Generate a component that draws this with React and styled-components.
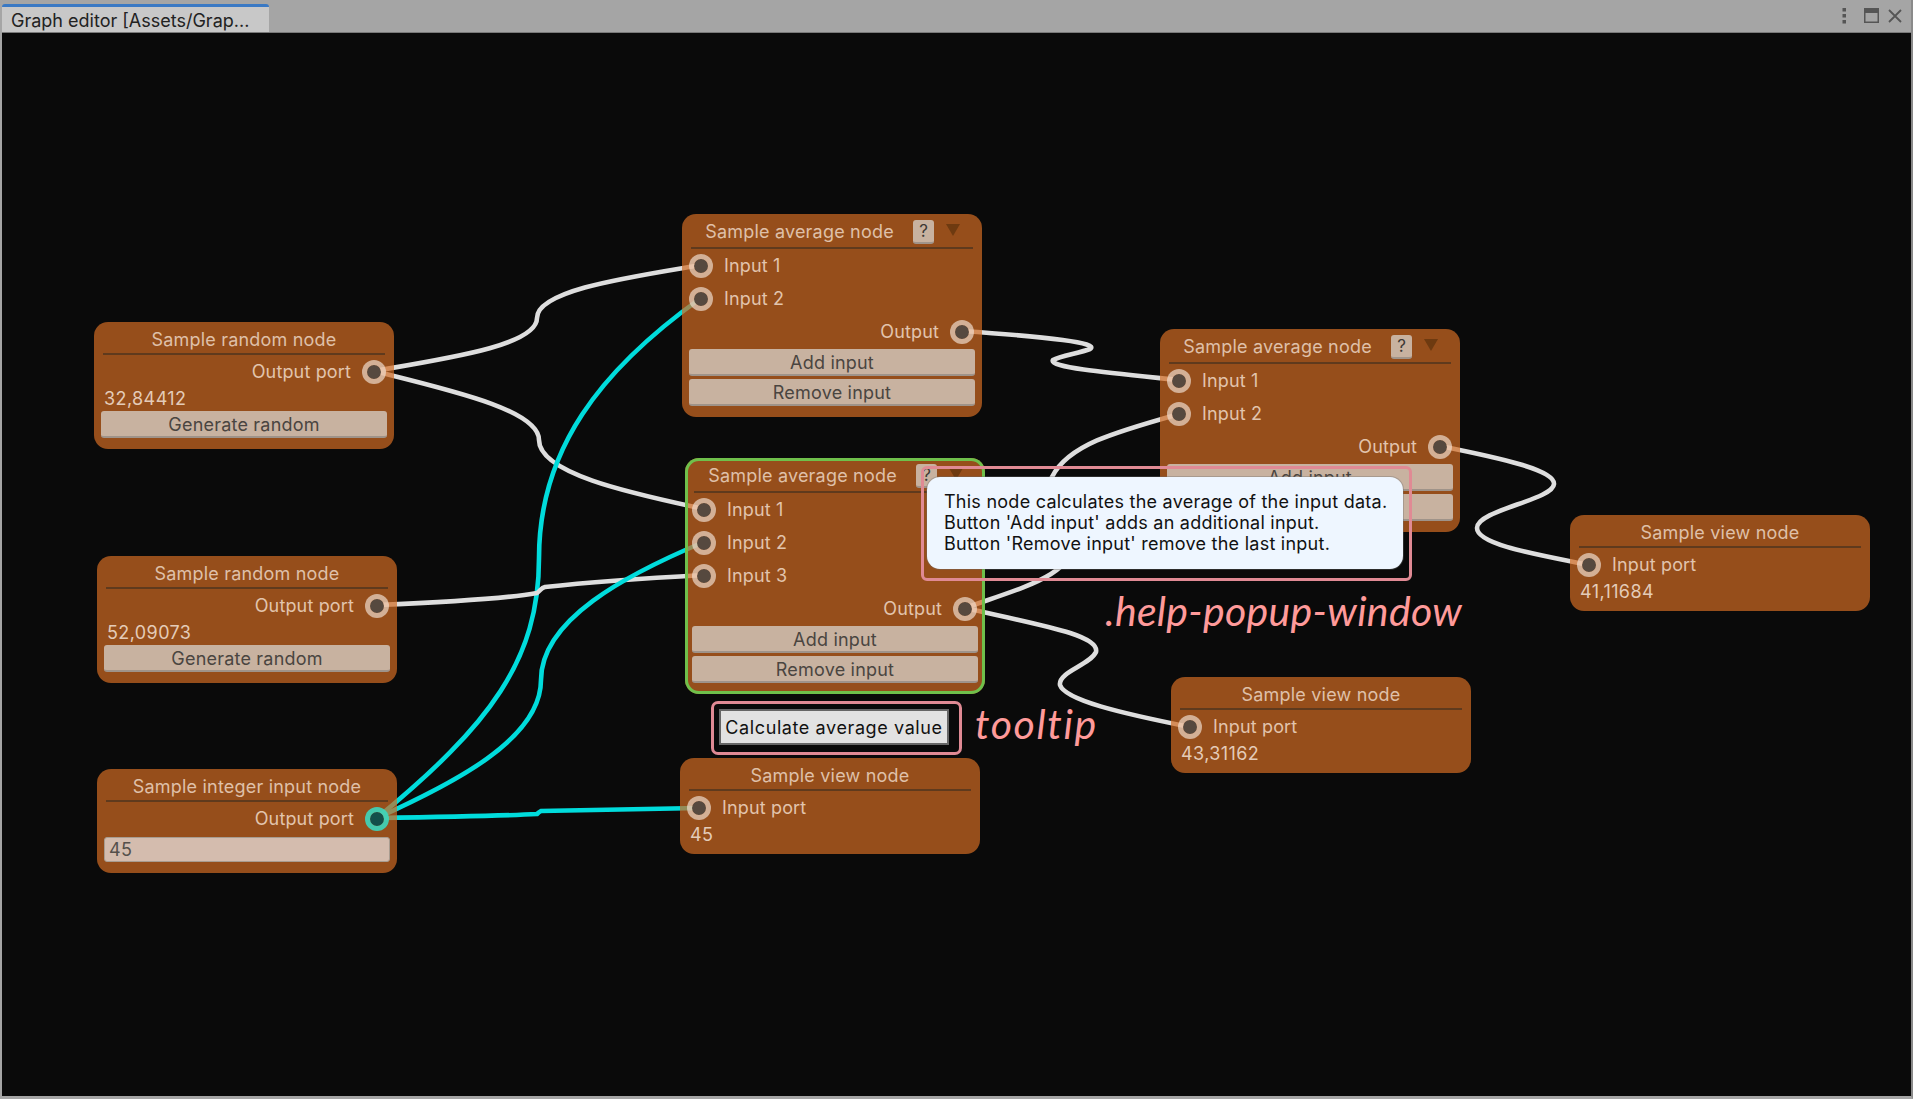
import React from 'react';
import styled, { createGlobalStyle } from 'styled-components';

const BAR_HEIGHT = 33;

const GlobalStyle = createGlobalStyle`
  html, body {
    margin: 0;
    padding: 0;
    background: #0a0a0a;
    overflow: hidden;
  }
  body {
    font-family: Inter, "Liberation Sans", sans-serif;
  }
`;

const EditorWindow = styled.div`
  width: 1913px;
  height: 1099px;
  box-sizing: border-box;
  display: flex;
  flex-direction: column;
  border-left: 2px solid #a5a5a5;
  border-right: 2px solid #8a8a8a;
  border-bottom: 3px solid #a5a5a5;
  background: #0a0a0a;
`;

const TitleBar = styled.div`
  height: ${BAR_HEIGHT}px;
  flex: none;
  box-sizing: border-box;
  padding-top: 4px;
  display: flex;
  align-items: stretch;
  justify-content: space-between;
  background: #a5a5a5;
  border-bottom: 1px solid #7a7a7a;
`;

const Tab = styled.div`
  width: 267px;
  box-sizing: border-box;
  padding: 1px 0 0 9px;
  display: flex;
  align-items: center;
  background: #c8c8c8;
  border-top: 3px solid #3a79c4;
  border-radius: 3px 3px 0 0;
  color: #222;
  font-size: 18px;
  white-space: nowrap;
`;

const BarIcons = styled.div`
  display: flex;
  align-items: center;
  gap: 9px;
  padding: 0 9px 5px 0;
  color: #555;
`;

const DotsSvg = styled.svg`
  margin-right: 8px;
`;

const Canvas = styled.div`
  position: relative;
  flex: 1;
`;

const WireLayer = styled.svg`
  position: absolute;
  left: -2px;
  top: 0;
  width: 1913px;
  height: ${1099 - BAR_HEIGHT}px;
`;

const Node = styled.div`
  position: absolute;
  left: ${(p) => p.$x - 2}px;
  top: ${(p) => p.$y - BAR_HEIGHT}px;
  width: 300px;
  box-sizing: border-box;
  padding: 0 7px ${(p) => p.$bottom ?? 11}px;
  border-radius: 14px;
  background: rgba(209, 107, 34, 0.7);
  box-shadow: ${(p) => (p.$selected ? 'inset 0 0 0 3px #6fc04b' : 'none')};
`;

const Header = styled.div`
  height: ${(p) => (p.$tall ? 35 : 33)}px;
  box-sizing: border-box;
  margin: 0 2px;
  padding-top: 7px;
  display: flex;
  align-items: flex-start;
  border-bottom: 2px solid #5f3a1d;
`;

const Title = styled.div`
  flex: 1;
  text-align: center;
  color: #dfc0a9;
  font-size: 18px;
  line-height: 22px;
  letter-spacing: 0.2px;
  white-space: nowrap;
`;

const HelpButton = styled.div`
  width: 21px;
  height: 24px;
  margin: -1px 12px 0 5px;
  box-sizing: border-box;
  display: flex;
  align-items: center;
  justify-content: center;
  border-radius: 3px;
  border-bottom: 2px solid #a0948a;
  background: #c8b2a0;
  color: #3d3935;
  font-size: 17px;
`;

const CollapseArrow = styled.div`
  width: 0;
  height: 0;
  margin: 3px 13px 0 0;
  border-left: 7px solid transparent;
  border-right: 7px solid transparent;
  border-top: 12px solid #6e3a10;
`;

const Row = styled.div`
  height: 33px;
  display: flex;
  align-items: center;
  justify-content: ${(p) => (p.$output ? 'flex-end' : 'flex-start')};
  gap: 11px;
  padding-right: ${(p) => (p.$output ? 1 : 0)}px;
  color: #e2c4ad;
  font-size: 18px;
  letter-spacing: 0.15px;
`;

const Port = styled.span`
  width: 24px;
  height: 24px;
  flex: none;
  box-sizing: border-box;
  border-radius: 50%;
  border: 5.5px solid ${(p) => (p.$active ? 'rgba(60, 215, 190, 0.9)' : 'rgba(240, 222, 209, 0.68)')};
  background: ${(p) => (p.$active ? '#134f4a' : '#56493f')};
  background-clip: padding-box;
`;

const Value = styled.div`
  height: 20px;
  margin: 1px 0 2px 3px;
  color: #e4cbb8;
  font-size: 18px;
  line-height: 20px;
  letter-spacing: 0.4px;
`;

const NodeButton = styled.div`
  height: 26.5px;
  box-sizing: border-box;
  margin-top: ${(p) => p.$top ?? 0}px;
  padding-top: 2px;
  display: flex;
  align-items: center;
  justify-content: center;
  border-radius: 3px;
  border-bottom: 2px solid #9f9389;
  background: #c8b2a0;
  color: #4a4540;
  font-size: 18px;
  letter-spacing: 0.2px;
`;

const NumberField = styled.div`
  height: 25px;
  box-sizing: border-box;
  margin-top: 2px;
  padding-left: 4px;
  display: flex;
  align-items: center;
  border: 1px solid #a89c90;
  border-radius: 3px;
  background: #d4bcae;
  color: #55504b;
  font-size: 18px;
  letter-spacing: 0.4px;
`;

const PopupFrame = styled.div`
  position: absolute;
  left: ${921 - 2}px;
  top: ${466 - BAR_HEIGHT}px;
  box-sizing: border-box;
  width: 491px;
  height: 115px;
  padding: 8px 6px 9px 3px;
  border: 3px solid #e08a94;
  border-radius: 6px;
`;

const Popup = styled.div`
  height: 100%;
  box-sizing: border-box;
  padding: 14px 10px 0 17px;
  border-radius: 13px;
  background: #eef6ff;
  box-shadow: 0 0 0 1px rgba(110, 110, 110, 0.35);
  color: #111;
  font-size: 18px;
  line-height: 21px;
  letter-spacing: 0.25px;
  white-space: nowrap;
`;

const TooltipFrame = styled.div`
  position: absolute;
  left: ${711 - 2}px;
  top: ${701 - BAR_HEIGHT}px;
  box-sizing: border-box;
  width: 251px;
  height: 54px;
  padding: 5px 10px 7px 5px;
  border: 3px solid #e08a94;
  border-radius: 7px;
`;

const Tooltip = styled.div`
  height: 100%;
  box-sizing: border-box;
  padding-top: 1px;
  display: flex;
  align-items: center;
  justify-content: center;
  border: 2px solid #666;
  background: #e2e2e2;
  color: #111;
  font-size: 18px;
  letter-spacing: 0.6px;
  white-space: nowrap;
`;

const Annotation = styled.div`
  position: absolute;
  left: ${(p) => p.$x - 2}px;
  top: ${(p) => p.$y - BAR_HEIGHT}px;
  color: #ff9a9a;
  font-family: Lato, "Open Sans", sans-serif;
  font-style: italic;
  font-size: 41px;
  line-height: 48px;
  letter-spacing: ${(p) => p.$spacing}px;
  white-space: nowrap;
`;

const WHITE = '#dedede';
const CYAN = '#00dcdc';

const wires = [
  { color: WHITE, d: 'M374 371C450 358 537 345 537 318C537 290 630 277 701 265' },
  { color: WHITE, d: 'M374 371C450 390 539 410 539 440C539 475 640 495 704 509' },
  { color: CYAN, d: 'M377 818C490 725 539 660 539 558C539 450 600 370 701 298' },
  { color: WHITE, d: 'M377 605C450 602 510 598 537 593C541 590 541 588 545 587C600 581 650 578 704 575' },
  { color: CYAN, d: 'M377 818C450 785 541 740 541 680C541 620 625 575 704 542' },
  { color: CYAN, d: 'M377 818C440 817 500 816 537 814C539 812 539 812 541 811C590 810 640 809 699 808' },
  { color: WHITE, d: 'M962 331C1050 337 1100 343 1090 349C1080 353 1060 356 1053 360C1048 368 1120 374 1179 380' },
  { color: WHITE, d: 'M965 608C1030 585 1075 575 1075 535C1075 510 1035 500 1052 477C1068 445 1115 432 1179 414' },
  { color: WHITE, d: 'M965 608C1040 625 1100 635 1096 652C1090 665 1058 672 1060 685C1065 700 1120 713 1190 727' },
  { color: WHITE, d: 'M1440 446C1500 458 1555 470 1554 484C1553 500 1477 510 1477 528C1477 545 1540 555 1589 565' },
];

const OutputRow = ({ label, active }) => (
  <Row $output>
    <span>{label}</span>
    <Port $active={active} />
  </Row>
);

const InputRow = ({ label }) => (
  <Row>
    <Port />
    <span>{label}</span>
  </Row>
);

const RandomNode = ({ x, y, value }) => (
  <Node $x={x} $y={y}>
    <Header>
      <Title>Sample random node</Title>
    </Header>
    <OutputRow label="Output port" />
    <Value>{value}</Value>
    <NodeButton>Generate random</NodeButton>
  </Node>
);

const AverageNode = ({ x, y, inputs, selected }) => (
  <Node $x={x} $y={y} $selected={selected}>
    <Header $tall>
      <Title>Sample average node</Title>
      <HelpButton>?</HelpButton>
      <CollapseArrow />
    </Header>
    {inputs.map((label) => (
      <InputRow key={label} label={label} />
    ))}
    <OutputRow label="Output" />
    <NodeButton $top={1}>Add input</NodeButton>
    <NodeButton $top={3.5}>Remove input</NodeButton>
  </Node>
);

const ViewNode = ({ x, y, value }) => (
  <Node $x={x} $y={y} $bottom={7}>
    <Header>
      <Title>Sample view node</Title>
    </Header>
    <InputRow label="Input port" />
    <Value>{value}</Value>
  </Node>
);

const DotsIcon = () => (
  <DotsSvg width="5" height="16" viewBox="0 0 5 16" fill="currentColor">
    <rect x="0.5" y="0" width="3.5" height="3.5" />
    <rect x="0.5" y="6" width="3.5" height="3.5" />
    <rect x="0.5" y="12" width="3.5" height="3.5" />
  </DotsSvg>
);

const MaximizeIcon = () => (
  <svg width="15" height="15" viewBox="0 0 15 15" fill="none" stroke="currentColor" strokeWidth="1.5">
    <rect x="0.75" y="0.75" width="13.5" height="13.5" />
    <rect x="0.75" y="0.75" width="13.5" height="3.5" fill="currentColor" />
  </svg>
);

const CloseIcon = () => (
  <svg width="14" height="14" viewBox="0 0 14 14" fill="none" stroke="currentColor" strokeWidth="1.8">
    <path d="M1 1L13 13M13 1L1 13" />
  </svg>
);

const App = () => (
  <>
    <GlobalStyle />
    <EditorWindow>
      <TitleBar>
        <Tab>Graph editor [Assets/Grap...</Tab>
        <BarIcons>
          <DotsIcon />
          <MaximizeIcon />
          <CloseIcon />
        </BarIcons>
      </TitleBar>
      <Canvas>
        <WireLayer viewBox={`0 ${BAR_HEIGHT} 1913 ${1099 - BAR_HEIGHT}`} fill="none" strokeWidth="4.6" strokeLinecap="round">
          {wires.map((wire) => (
            <path key={wire.d} d={wire.d} stroke={wire.color} />
          ))}
        </WireLayer>

        <RandomNode x={94} y={322} value="32,84412" />
        <RandomNode x={97} y={556} value="52,09073" />

        <Node $x={97} $y={769}>
          <Header>
            <Title>Sample integer input node</Title>
          </Header>
          <OutputRow label="Output port" active />
          <NumberField>45</NumberField>
        </Node>

        <AverageNode x={682} y={214} inputs={['Input 1', 'Input 2']} />
        <AverageNode x={685} y={458} inputs={['Input 1', 'Input 2', 'Input 3']} selected />
        <AverageNode x={1160} y={329} inputs={['Input 1', 'Input 2']} />

        <ViewNode x={680} y={758} value="45" />
        <ViewNode x={1171} y={677} value="43,31162" />
        <ViewNode x={1570} y={515} value="41,11684" />

        <PopupFrame>
          <Popup>
            This node calculates the average of the input data.
            <br />
            Button 'Add input' adds an additional input.
            <br />
            Button 'Remove input' remove the last input.
          </Popup>
        </PopupFrame>

        <TooltipFrame>
          <Tooltip>Calculate average value</Tooltip>
        </TooltipFrame>

        <Annotation $x={1105} $y={587} $spacing={0.3}>.help-popup-window</Annotation>
        <Annotation $x={975} $y={700} $spacing={1.6}>tooltip</Annotation>
      </Canvas>
    </EditorWindow>
  </>
);

export default App;
